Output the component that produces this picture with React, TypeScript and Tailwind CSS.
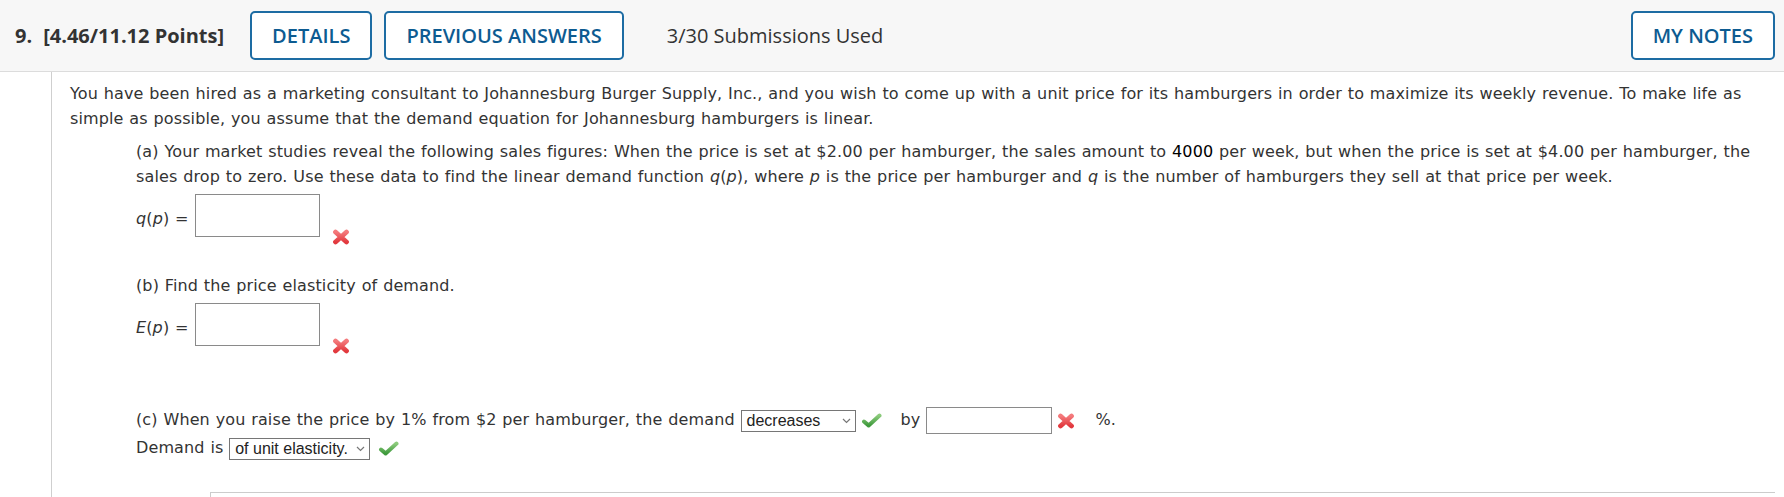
import React from 'react';

function WrongMark({ className = '' }: { className?: string }) {
  return (
    <svg className={className} width="18" height="16" viewBox="0 0 18 16">
      <defs>
        <linearGradient id="xg" x1="0" y1="0" x2="0" y2="1">
          <stop offset="0" stopColor="#f47a7c" />
          <stop offset="1" stopColor="#e2393e" />
        </linearGradient>
      </defs>
      <path d="M3.5 3 L14.5 13 M14.5 3 L3.5 13" stroke="url(#xg)" strokeWidth="4.8" strokeLinecap="round" fill="none" />
    </svg>
  );
}

function RightMark({ className = '' }: { className?: string }) {
  return (
    <svg className={className} width="21" height="15" viewBox="0 0 21 15">
      <defs>
        <linearGradient id="cg" x1="0" y1="0" x2="0" y2="1">
          <stop offset="0" stopColor="#8ccb7c" />
          <stop offset="1" stopColor="#3f9a3d" />
        </linearGradient>
      </defs>
      <path d="M3 8.5 L7.6 12.4 L18.5 2.6" stroke="url(#cg)" strokeWidth="4" strokeLinecap="round" strokeLinejoin="round" fill="none" />
    </svg>
  );
}

function FakeSelect({ value, width }: { value: string; width: string }) {
  return (
    <span
      className={`inline-flex items-center justify-between h-[22px] border border-[#767676] bg-white pl-[5px] pr-[4px] align-middle font-['Liberation_Sans',Arial,sans-serif] text-[16px] leading-none tracking-normal [word-spacing:0] text-[#222] ${width}`}
    >
      <span>{value}</span>
      <svg width="9" height="6" viewBox="0 0 9 6" className="ml-2">
        <path d="M1 1 L4.5 4.5 L8 1" stroke="#777" strokeWidth="1.2" fill="none" />
      </svg>
    </span>
  );
}

function HeaderButton({ children }: { children: React.ReactNode }) {
  return (
    <button className="h-[49px] px-[20px] border-2 border-[#1d6ca3] rounded-[5px] bg-white text-[#0d5b91] font-semibold text-[20px] uppercase">
      {children}
    </button>
  );
}

export default function App() {
  return (
    <div className="h-[497px] overflow-hidden flex flex-col bg-white text-[#333]">
      <div className="h-[72px] shrink-0 flex items-center bg-[#f7f7f7] border-b border-[#dcdcdc] pl-[15px] pr-[9px] font-['Open_Sans',sans-serif]">
        <span className="font-bold text-[20px] text-[#333]">9.</span>
        <span className="ml-[11px] font-bold text-[20px] text-[#333]">[4.46/11.12 Points]</span>
        <div className="ml-[26px] flex gap-[12px]">
          <HeaderButton>Details</HeaderButton>
          <HeaderButton>Previous Answers</HeaderButton>
        </div>
        <span className="ml-[43px] text-[20px] text-[#333]">3/30 Submissions Used</span>
        <div className="ml-auto">
          <HeaderButton>My Notes</HeaderButton>
        </div>
      </div>

      <div className="flex-1 ml-[51px] border-l border-[#cfcfcf] pl-[18px] pr-[9px] pt-[9px] font-['DejaVu_Sans',Verdana,sans-serif] text-[16px] leading-[25px] tracking-[0.12px] [word-spacing:0.6px]">
        <p>
          You have been hired as a marketing consultant to Johannesburg Burger Supply, Inc., and you wish to come up with a unit price for its hamburgers in order to maximize its weekly revenue. To make life as simple as possible, you assume that the demand equation for Johannesburg hamburgers is linear.
        </p>

        <div className="ml-[66px]">
          <p className="mt-[8px]">
            (a) Your market studies reveal the following sales figures: When the price is set at $2.00 per hamburger, the sales amount to <span className="text-black">4000</span> per week, but when the price is set at $4.00 per hamburger, the sales drop to zero. Use these data to find the linear demand function <i>q</i>(<i>p</i>), where <i>p</i> is the price per hamburger and <i>q</i> is the number of hamburgers they sell at that price per week.
          </p>

          <div className="mt-[5px] flex items-start h-[43px]">
            <span className="mt-[12px] mr-[6px]"><i>q</i>(<i>p</i>) =</span>
            <span className="w-[125px] h-[43px] border border-[#8a8a8a] bg-white" />
            <WrongMark className="mt-[35px] ml-[12px]" />
          </div>

          <p className="mt-[36px]">(b) Find the price elasticity of demand.</p>

          <div className="mt-[5px] flex items-start h-[43px]">
            <span className="mt-[12px] mr-[6px]"><i>E</i>(<i>p</i>) =</span>
            <span className="w-[125px] h-[43px] border border-[#8a8a8a] bg-white" />
            <WrongMark className="mt-[35px] ml-[12px]" />
          </div>

          <p className="mt-[61px]">
            (c) When you raise the price by 1% from $2 per hamburger, the demand{' '}
            <FakeSelect value="decreases" width="w-[115px]" />
            <RightMark className="inline-block align-middle ml-[5px]" />
            <span className="ml-[19px]">by</span>
            <span className="inline-block align-middle ml-[6px] w-[126px] h-[27px] border border-[#8a8a8a] bg-white" />
            <WrongMark className="inline-block align-middle ml-[5px]" />
            <span className="ml-[20px]">%.</span>
          </p>
          <p className="mt-[1px]">
            Demand is <FakeSelect value="of unit elasticity." width="w-[141px]" />
            <RightMark className="inline-block align-middle ml-[8px]" />
          </p>

          <div className="mt-[32px] ml-[74px] h-[20px] border-t border-l border-[#cccccc]" />
        </div>
      </div>
    </div>
  );
}
